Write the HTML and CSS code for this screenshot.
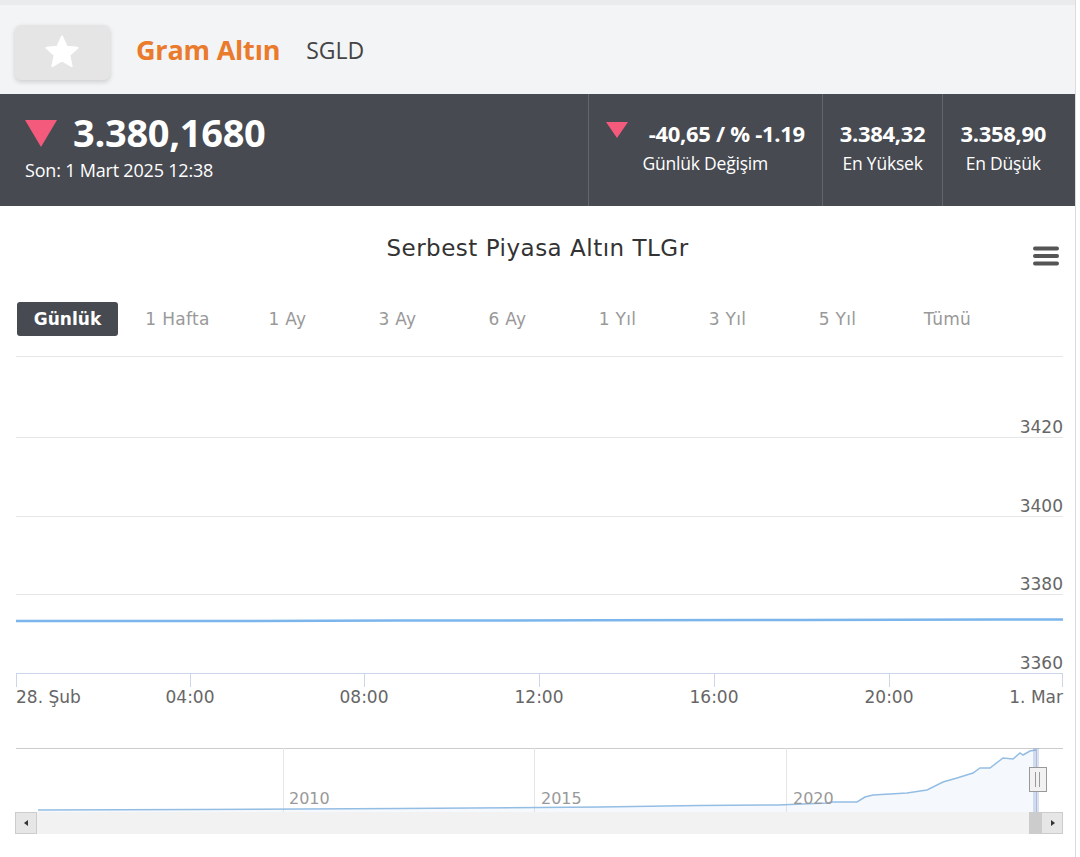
FILE: index.html
```html
<!DOCTYPE html>
<html lang="tr">
<head>
<meta charset="utf-8">
<title>Gram Altın</title>
<link rel="stylesheet" href="styles.css">
</head>
<body>
<div class="page">
  <header class="head">
    <button class="fav" aria-label="Favori">
      <svg width="36" height="34" viewBox="0 0 36 34"><path d="M18 1.5l4.6 10.2 11 1.1-8.3 7.4 2.4 10.9L18 25.4l-9.7 5.7 2.4-10.9-8.3-7.4 11-1.1z" fill="#fff" stroke="#fff" stroke-width="2" stroke-linejoin="round"/></svg>
    </button>
    <h1 class="name">Gram Altın</h1>
    <span class="code">SGLD</span>
  </header>

  <section class="quote">
    <div class="last">
      <div class="price-row">
        <span class="tri tri-big"></span>
        <span class="price">3.380,1680</span>
      </div>
      <div class="time">Son: 1 Mart 2025 12:38</div>
    </div>
    <div class="stat">
      <div class="val"><span class="tri tri-small"></span><span>-40,65 / % -1.19</span></div>
      <div class="lbl">Günlük Değişim</div>
    </div>
    <div class="stat">
      <div class="val">3.384,32</div>
      <div class="lbl">En Yüksek</div>
    </div>
    <div class="stat">
      <div class="val">3.358,90</div>
      <div class="lbl">En Düşük</div>
    </div>
  </section>

  <section class="chart">
    <div class="chart-title">Serbest Piyasa Altın TLGr</div>
    <button class="menu" aria-label="Menü">
      <svg width="26" height="20" viewBox="0 0 26 20"><g stroke="#555" stroke-width="4" stroke-linecap="round"><line x1="2" y1="2.5" x2="24" y2="2.5"/><line x1="2" y1="10" x2="24" y2="10"/><line x1="2" y1="17.5" x2="24" y2="17.5"/></g></svg>
    </button>
    <div class="ranges">
      <span class="rng on">Günlük</span>
      <span class="rng">1 Hafta</span>
      <span class="rng">1 Ay</span>
      <span class="rng">3 Ay</span>
      <span class="rng">6 Ay</span>
      <span class="rng">1 Yıl</span>
      <span class="rng">3 Yıl</span>
      <span class="rng">5 Yıl</span>
      <span class="rng">Tümü</span>
    </div>
    <svg class="plot" width="1075" height="511" viewBox="0 0 1075 511">
      <g stroke="#e6e6e6" stroke-width="1">
        <line x1="16" y1="10.5" x2="1063" y2="10.5"/>
        <line x1="16" y1="91.5" x2="1063" y2="91.5"/>
        <line x1="16" y1="170.5" x2="1063" y2="170.5"/>
        <line x1="16" y1="248.5" x2="1063" y2="248.5"/>
      </g>
      <g class="ylab" text-anchor="end">
        <text x="1063" y="87">3420</text>
        <text x="1063" y="166">3400</text>
        <text x="1063" y="244">3380</text>
        <text x="1063" y="323">3360</text>
      </g>
      <path d="M16 275 L200 275 L400 274.6 L600 274.3 L800 274 L1000 273.6 L1063 273.5" fill="none" stroke="#7cb5ec" stroke-width="2.5"/>
      <g stroke="#ccd6eb" stroke-width="1">
        <line x1="16" y1="327.5" x2="1063" y2="327.5"/>
        <line x1="16.5" y1="327" x2="16.5" y2="341"/>
        <line x1="190.5" y1="327" x2="190.5" y2="341"/>
        <line x1="364.5" y1="327" x2="364.5" y2="341"/>
        <line x1="539.5" y1="327" x2="539.5" y2="341"/>
        <line x1="714.5" y1="327" x2="714.5" y2="341"/>
        <line x1="889.5" y1="327" x2="889.5" y2="341"/>
        <line x1="1062.5" y1="327" x2="1062.5" y2="341"/>
      </g>
      <g class="xlab" text-anchor="middle">
        <text x="16" y="357" text-anchor="start">28. Şub</text>
        <text x="190" y="357">04:00</text>
        <text x="364" y="357">08:00</text>
        <text x="539" y="357">12:00</text>
        <text x="714" y="357">16:00</text>
        <text x="889" y="357">20:00</text>
        <text x="1063" y="357" text-anchor="end">1. Mar</text>
      </g>
      <line x1="16" y1="402.5" x2="1063" y2="402.5" stroke="#cccccc"/>
      <g stroke="#e6e6e6">
        <line x1="283.5" y1="402" x2="283.5" y2="466"/>
        <line x1="534.5" y1="402" x2="534.5" y2="466"/>
        <line x1="786.5" y1="402" x2="786.5" y2="466"/>
      </g>
      <path d="M38 464 L200 463.5 L400 462.5 L600 461 L700 459.5 L778 459 L827 457 L833 456 L857 456 L865 451 L873 449 L907 447 L927 444 L943 436 L957 432 L973 427 L980 422 L990 422 L1003 412 L1013 413 L1020 407 L1023 409 L1030 405 L1036 404 L1036 466 L38 466 Z" fill="rgba(124,181,236,0.08)" stroke="none"/>
      <path d="M38 464 L200 463.5 L400 462.5 L600 461 L700 459.5 L778 459 L827 457 L833 456 L857 456 L865 451 L873 449 L907 447 L927 444 L943 436 L957 432 L973 427 L980 422 L990 422 L1003 412 L1013 413 L1020 407 L1023 409 L1030 405 L1036 404" fill="none" stroke="#94bde3" stroke-width="1.5"/>
      <g class="navlab">
        <text x="289" y="458">2010</text>
        <text x="541" y="458">2015</text>
        <text x="793" y="458">2020</text>
      </g>
      <rect x="1033" y="402" width="6" height="64" fill="rgba(102,133,194,0.25)"/>
      <line x1="1036.5" y1="402" x2="1036.5" y2="466" stroke="#b0bdd2"/>
      <rect x="1029.5" y="421.5" width="17" height="24" fill="#f2f2f2" stroke="#999"/>
      <line x1="1035.5" y1="426" x2="1035.5" y2="441" stroke="#999"/>
      <line x1="1039.5" y1="426" x2="1039.5" y2="441" stroke="#999"/>
      <rect x="36" y="466" width="1006" height="22" fill="#f2f2f2"/>
      <rect x="1029" y="466" width="13" height="22" fill="#cccccc"/>
      <rect x="15.5" y="466.5" width="21" height="21" fill="#e6e6e6" stroke="#cccccc"/>
      <path d="M24 477 L28 474 L28 480 Z" fill="#333"/>
      <rect x="1041.5" y="466.5" width="21" height="21" fill="#e6e6e6" stroke="#cccccc"/>
      <path d="M1055 477 L1051 474 L1051 480 Z" fill="#333"/>
    </svg>
  </section>
</div>
</body>
</html>
```
FILE: styles.css
```css
* { box-sizing: border-box; }
html, body { margin: 0; padding: 0; background: #fff; }
body { font-family: "Open Sans", "Noto Sans", sans-serif; }
.page { width: 1076px; border-right: 1px solid #dcdcdc; min-height: 857px; }

.head {
  height: 94px;
  background: #f3f4f5;
  border-top: 5px solid #e9ebec;
  display: flex;
  align-items: center;
  padding-left: 15px;
}
.fav {
  width: 95px; height: 55px;
  margin-top: 5px;
  border: 0; border-radius: 6px;
  background: #e5e5e5;
  box-shadow: 0 2px 5px rgba(0,0,0,0.16);
  display: flex; align-items: center; justify-content: center;
  padding: 0; padding-right: 2px;
}
.name {
  margin: 0 0 0 26px;
  font-size: 27px; font-weight: 700; color: #ea7a2c;
  letter-spacing: -0.2px;
}
.code { margin-left: 26px; font-size: 23px; color: #444; }

.quote {
  height: 112px;
  background: #474a51;
  color: #fff;
  display: flex;
  padding-right: 12px;
}
.last { flex: 1; padding: 20px 0 0 25px; }
.price-row { display: flex; align-items: center; height: 36px; }
.tri { display: inline-block; width: 0; height: 0; border-style: solid; border-color: #f45a7c transparent transparent transparent; }
.tri-big { border-width: 27px 16px 0 16px; margin-right: 16px; margin-top: 2px; }
.tri-small { border-width: 16px 11px 0 11px; margin-right: 21px; margin-top: -6px; }
.price { font-size: 38px; font-weight: 700; letter-spacing: -0.3px; line-height: 36px; }
.time { font-size: 18px; line-height: 24px; margin-top: 8px; letter-spacing: -0.2px; }
.stat {
  border-left: 1px solid #62656b;
  padding: 24px 17px 0;
  display: flex; flex-direction: column; align-items: center;
}
.val { font-size: 22px; font-weight: 700; display: flex; align-items: center; line-height: 30px; letter-spacing: -0.3px; }
.lbl { font-size: 17.5px; margin-top: 3px; line-height: 24px; letter-spacing: -0.2px; }

.chart { position: relative; font-family: "DejaVu Sans", Verdana, sans-serif; }
.chart-title { text-align: center; font-size: 23px; letter-spacing: 0.5px; color: #333; padding-top: 29px; line-height: 26px; height: 96px; }
.menu { position: absolute; right: 16px; top: 40px; background: none; border: 0; padding: 0; }
.ranges { display: flex; gap: 9px; padding-left: 17px; height: 44px; }
.rng { width: 101px; height: 34px; display: flex; align-items: center; justify-content: center; font-size: 17px; letter-spacing: 0.3px; color: #999; }
.rng.on { background: #474a51; color: #fff; font-weight: 700; border-radius: 3px; letter-spacing: 0; }
.plot { display: block; }
.ylab text { font-size: 17px; fill: #666; font-family: "DejaVu Sans", sans-serif; }
.xlab text { font-size: 17px; fill: #666; font-family: "DejaVu Sans", sans-serif; }
.navlab text { font-size: 16px; fill: #999; font-family: "DejaVu Sans", sans-serif; }
```
